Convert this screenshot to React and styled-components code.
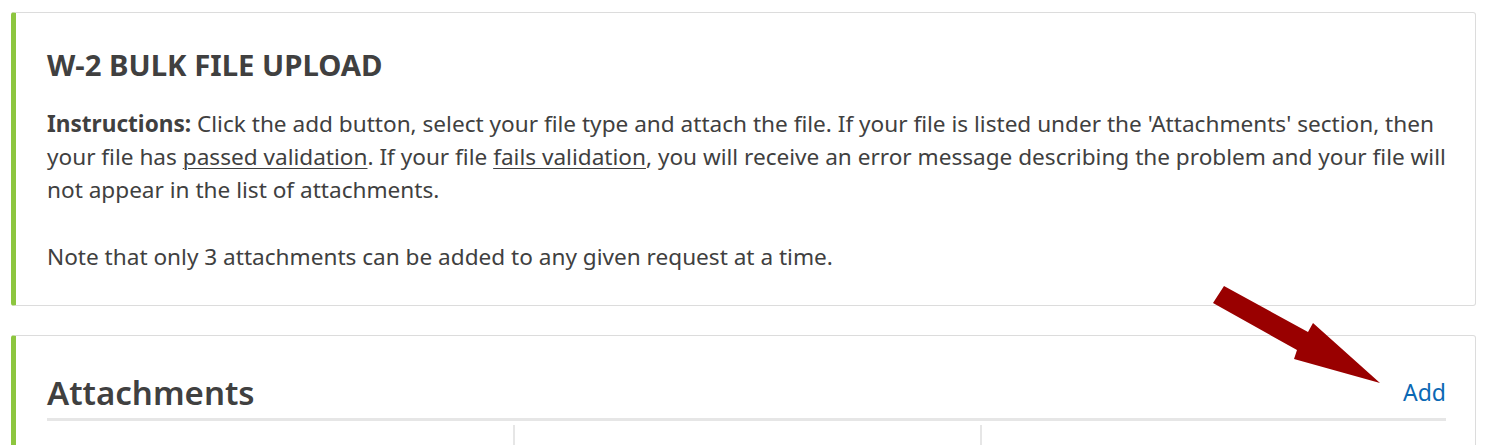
import React from "react";
import styled, { createGlobalStyle } from "styled-components";

const Global = createGlobalStyle`
  html, body { margin: 0; padding: 0; background: #fff; }
  body { font-family: "Noto Sans", "Open Sans", sans-serif; color: #404040; }
`;

const Page = styled.div`
  position: relative;
  padding: 12px 19px 0 11px;
  height: 445px;
  box-sizing: border-box;
  overflow: hidden;
  display: flex;
  flex-direction: column;
  gap: 29px;
`;

const Card = styled.section`
  background: #fff;
  border: 1px solid #dcdcdc;
  border-left: 5px solid #8dc63f;
  border-radius: 3px;
  padding: ${(p) => p.$pad};
`;

const Title = styled.h2`
  margin: 0 0 24px;
  font-size: 29.3px;
  line-height: 36px;
  font-weight: 700;
  color: #404040;
`;

const Para = styled.p`
  margin: 0 0 ${(p) => (p.$last ? "0" : "34px")};
  font-size: 22.6px;
  line-height: 33px;
  color: #404040;
`;

const Line = styled.span`
  display: block;
  white-space: nowrap;
`;

const U = styled.span`
  text-decoration: underline;
  text-underline-offset: 3px;
  text-decoration-thickness: 1px;
`;

const HeadRow = styled.div`
  display: flex;
  justify-content: space-between;
  align-items: center;
  border-bottom: 3px solid #e6e6e6;
  padding-bottom: 3px;
`;

const Heading = styled.h1`
  margin: 0;
  font-size: 33px;
  line-height: 44px;
  font-weight: 600;
  color: #404040;
`;

const AddLink = styled.a`
  font-size: 23px;
  line-height: 30px;
  margin-bottom: 3px;
  color: #0a68b4;
  text-decoration: none;
`;

const Columns = styled.div`
  display: grid;
  grid-template-columns: repeat(3, 1fr);
  margin-top: 4px;
  height: 40px;
`;

const Column = styled.div`
  border-left: ${(p) => (p.$first ? "none" : "2px solid #e6e6e6")};
`;

const ArrowSvg = styled.svg`
  position: absolute;
  left: 0;
  top: 0;
  pointer-events: none;
`;

export default function App() {
  return (
    <>
      <Global />
      <Page>
        <Card $pad="34px 29px 32px 31px">
          <Title>W-2 BULK FILE UPLOAD</Title>
          <Para>
            <Line>
              <b>Instructions:</b> Click the add button, select your file type and attach the file. If
              your file is listed under the 'Attachments' section, then
            </Line>
            <Line>
              your file has <U>passed validation</U>. If your file <U>fails validation</U>, you will
              receive an error message describing the problem and your file will
            </Line>
            <Line>not appear in the list of attachments.</Line>
          </Para>
          <Para $last>Note that only 3 attachments can be added to any given request at a time.</Para>
        </Card>
        <Card $pad="35px 29px 0 31px">
          <HeadRow>
            <Heading>Attachments</Heading>
            <AddLink href="#">Add</AddLink>
          </HeadRow>
          <Columns>
            <Column $first />
            <Column />
            <Column />
          </Columns>
        </Card>
        <ArrowSvg width="1495" height="445" viewBox="0 0 1495 445">
          <polygon
            points="1224,286 1308,332 1313,323 1380,383 1294,359 1297,350 1213,303"
            fill="#990000"
          />
        </ArrowSvg>
      </Page>
    </>
  );
}
